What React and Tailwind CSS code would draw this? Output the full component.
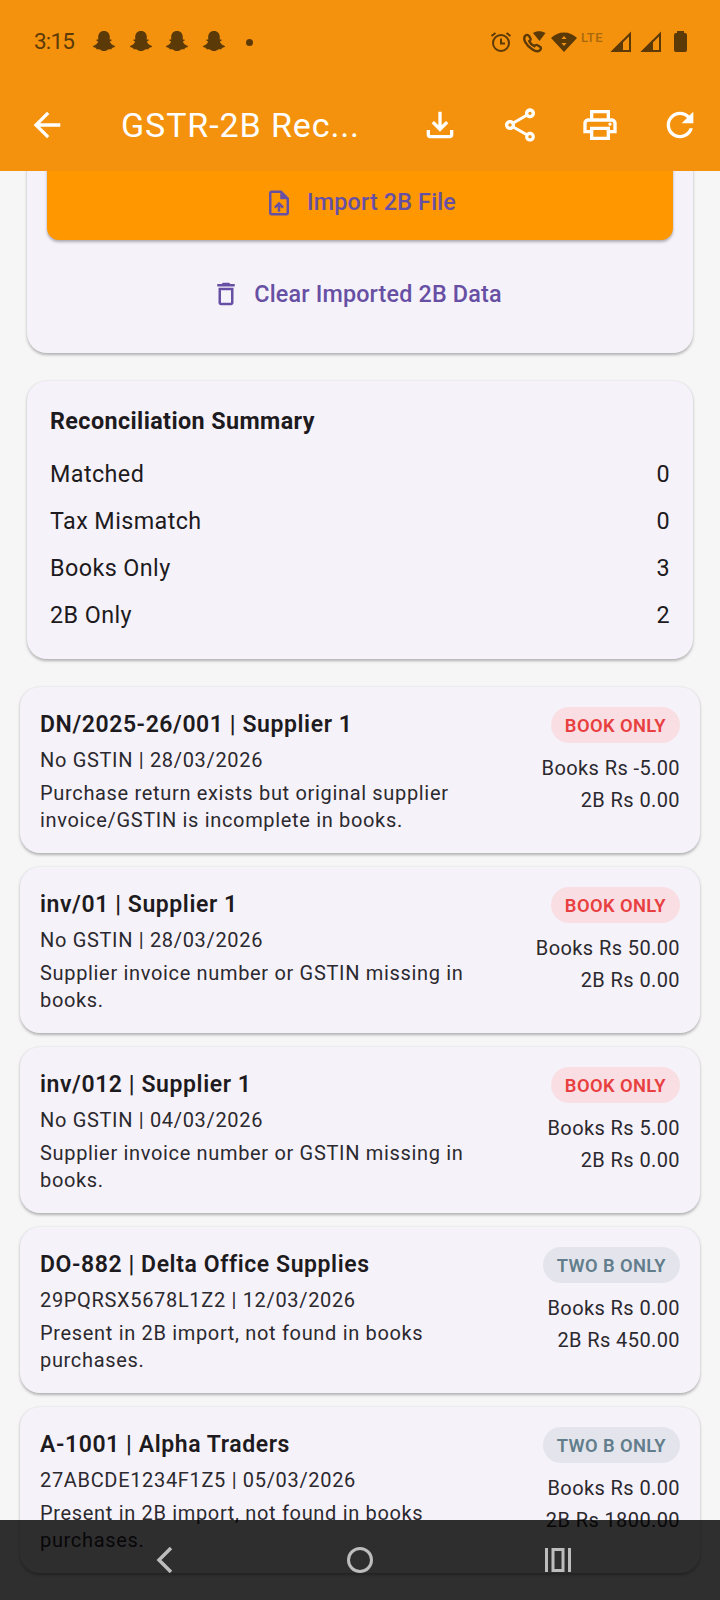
const records = [
  { title: "DN/2025-26/001 | Supplier 1", sub: "No GSTIN | 28/03/2026", note: "Purchase return exists but original supplier invoice/GSTIN is incomplete in books.", books: "Books Rs -5.00", twoB: "2B Rs 0.00", tag: "BOOK ONLY" },
  { title: "inv/01 | Supplier 1", sub: "No GSTIN | 28/03/2026", note: "Supplier invoice number or GSTIN missing in books.", books: "Books Rs 50.00", twoB: "2B Rs 0.00", tag: "BOOK ONLY" },
  { title: "inv/012 | Supplier 1", sub: "No GSTIN | 04/03/2026", note: "Supplier invoice number or GSTIN missing in books.", books: "Books Rs 5.00", twoB: "2B Rs 0.00", tag: "BOOK ONLY" },
  { title: "DO-882 | Delta Office Supplies", sub: "29PQRSX5678L1Z2 | 12/03/2026", note: "Present in 2B import, not found in books purchases.", books: "Books Rs 0.00", twoB: "2B Rs 450.00", tag: "TWO B ONLY" },
  { title: "A-1001 | Alpha Traders", sub: "27ABCDE1234F1Z5 | 05/03/2026", note: "Present in 2B import, not found in books purchases.", books: "Books Rs 0.00", twoB: "2B Rs 1800.00", tag: "TWO B ONLY" },
];

const summary = [
  ["Matched", 0],
  ["Tax Mismatch", 0],
  ["Books Only", 3],
  ["2B Only", 2],
];

// material icon paths, the app bar ones are all drawn at 40px
const paths = {
  back: "M20 11H7.83l5.59-5.59L12 4l-8 8 8 8 1.41-1.41L7.83 13H20v-2z",
  download: "M18 15v3H6v-3H4v3c0 1.1.9 2 2 2h12c1.1 0 2-.9 2-2v-3h-2zm-1-4l-1.41-1.41L13 12.17V4h-2v8.17L8.41 9.59 7 11l5 5 5-5z",
  share: "M18 16.08c-.76 0-1.44.3-1.96.77L8.91 12.7c.05-.23.09-.46.09-.7s-.04-.47-.09-.7l7.05-4.11c.54.5 1.25.81 2.04.81 1.66 0 3-1.34 3-3s-1.34-3-3-3-3 1.34-3 3c0 .24.04.47.09.7L8.04 9.81C7.5 9.31 6.79 9 6 9c-1.66 0-3 1.34-3 3s1.34 3 3 3c.79 0 1.5-.31 2.04-.81l7.12 4.16c-.05.21-.08.43-.08.65 0 1.61 1.31 2.92 2.92 2.92 1.61 0 2.92-1.31 2.92-2.92s-1.31-2.92-2.92-2.92zM18 4c.55 0 1 .45 1 1s-.45 1-1 1-1-.45-1-1 .45-1 1-1zM6 13c-.55 0-1-.45-1-1s.45-1 1-1 1 .45 1 1-.45 1-1 1zm12 7.02c-.55 0-1-.45-1-1s.45-1 1-1 1 .45 1 1-.45 1-1 1z",
  print: "M19 8h-1V3H6v5H5c-1.66 0-3 1.34-3 3v6h4v4h12v-4h4v-6c0-1.66-1.34-3-3-3zM8 5h8v3H8V5zm8 12v2H8v-4h8v2zm2-2v-2H6v2H4v-4c0-.55.45-1 1-1h14c.55 0 1 .45 1 1v4h-2z M18 10.5a1 1 0 1 0 0 2 1 1 0 0 0 0-2z",
  refresh: "M17.65 6.35C16.2 4.9 14.21 4 12 4c-4.42 0-7.99 3.58-7.99 8s3.57 8 7.99 8c3.73 0 6.84-2.55 7.73-6h-2.08c-.82 2.33-3.04 4-5.65 4-3.31 0-6-2.69-6-6s2.69-6 6-6c1.66 0 3.14.69 4.22 1.78L13 11h7V4l-2.35 2.35z",
  upload: "M14 2H6c-1.1 0-2 .9-2 2v16c0 1.1.9 2 2 2h12c1.1 0 2-.9 2-2V8l-6-6zm4 18H6V4h7v5h5v11zM8 15.01l1.41 1.41L11 14.84V19h2v-4.16l1.59 1.59L16 15.01 12.01 11z",
  trash: "M6 19c0 1.1.9 2 2 2h8c1.1 0 2-.9 2-2V7H6v12zM8 9h8v10H8V9zm7.5-5l-1-1h-5l-1 1H5v2h14V4z",
};

function Icon({ name, size = 40 }) {
  return (
    <svg width={size} height={size} viewBox="0 0 24 24" fill="currentColor">
      <path d={paths[name]} />
    </svg>
  );
}

function Ghost() {
  return (
    <svg width="24" height="24" viewBox="0 0 24 24" fill="#5c3a07">
      <path d="M12 1c3.8 0 5.8 2.7 5.8 6 0 1 0 1.8-.1 2.5.7.2 1.4-.2 1.9.3.4.6-.4 1.2-1.7 1.7.5 2 2.5 3.7 5.1 4.5.3 1-1.3 1.6-3 1.9-.4.4-.2 1.2-.7 1.4-1.1 0-2.1-.2-3.1.2-1 .4-2.2 1.6-4.2 1.6s-3.2-1.2-4.2-1.6c-1-.4-2-.2-3.1-.2-.5-.2-.3-1-.7-1.4-1.7-.3-3.3-.9-3-1.9 2.6-.8 4.6-2.5 5.1-4.5-1.3-.5-2.1-1.1-1.7-1.7.5-.5 1.2-.1 1.9-.3-.1-.7-.1-1.5-.1-2.5 0-3.3 2-6 5.8-6z" />
    </svg>
  );
}

function StatusBar() {
  return (
    <div className="flex h-[84px] items-center justify-between pl-[34px] pr-[33px] text-[#5c3a07]">
      <div className="flex items-center">
        <span className="w-[40px] text-[22.5px] tracking-[-0.8px]">3:15</span>
        <div className="ml-[18px] flex gap-[12.7px]">
          <Ghost />
          <Ghost />
          <Ghost />
          <Ghost />
        </div>
        <span className="ml-[20px] h-[7px] w-[7px] rounded-full bg-[#5c3a07]" />
      </div>
      <div className="flex items-center">
        <svg width="22" height="22" viewBox="0 0 22 22" fill="none" stroke="#5c3a07" strokeWidth="2">
          <circle cx="11" cy="12" r="8" />
          <path d="M11 7.5v5h4M1.5 5l4-3M20.5 5l-4-3" />
        </svg>
        <svg className="ml-[10px]" width="24" height="24" viewBox="0 0 24 24" fill="#5c3a07">
          <path d="M3 6c1.5-1.5 3-1.5 4 0l1.5 2.5c.5 1 0 1.7-1.2 2.7.9 2.2 2.8 4.1 5 5 1-1.2 1.7-1.7 2.7-1.2l3 1.7c1.3.8 1.2 2.3-.3 3.6-1.5 1.3-4.2 1-7.2-.8-3-1.8-5.7-4.5-7.3-7.5-1.2-2.3-1.2-4.5-.2-6z" fill="none" stroke="#5c3a07" strokeWidth="2.4" />
          <path d="M11 3c3.500-2.500 8.500-2.500 12.500 0l-6 8z" />
        </svg>
        <svg className="ml-[5px]" width="26" height="20" viewBox="0 0 26 20">
          <path d="M0 6c7-7.500 19-7.500 26 0L13 20z" fill="#5c3a07" />
          <path d="M13 4l2.500 3h-5zM13 14l2.500-3h-5z" fill="#f4920e" />
        </svg>
        <span className="-mt-[10px] ml-[4px] w-[25px] text-[13px] font-medium leading-none tracking-[0.4px] text-[#a8690c]">LTE</span>
        <svg className="ml-[4px]" width="22" height="22" viewBox="0 0 22 22" fill="none" stroke="#5c3a07" strokeWidth="2">
          <path d="M20 3v17H3z" />
          <path d="M3 20l9-9v9z" fill="#5c3a07" />
        </svg>
        <svg className="ml-[8px]" width="22" height="22" viewBox="0 0 22 22" fill="none" stroke="#5c3a07" strokeWidth="2">
          <path d="M20 3v17H3z" />
          <path d="M3 20l9-9v9z" fill="#5c3a07" />
        </svg>
        <span className="relative ml-[12px] h-[19px] w-[13px] rounded-[2px] bg-[#5c3a07]">
          <span className="absolute -top-[2px] left-[3px] h-[2px] w-[7px] bg-[#5c3a07]" />
        </span>
      </div>
    </div>
  );
}

function AppBar() {
  return (
    <div className="flex h-[87px] items-center pb-[5px] pl-[7px] text-white">
      <span className="flex w-[80px] justify-center"><Icon name="back" /></span>
      <span className="ml-[34px] flex-1 text-[34px] leading-none tracking-[0.9px]">GSTR-2B Rec...</span>
      <span className="flex w-[80px] justify-center"><Icon name="download" /></span>
      <span className="flex w-[80px] justify-center"><Icon name="share" /></span>
      <span className="flex w-[80px] justify-center"><Icon name="print" /></span>
      <span className="flex w-[80px] justify-center"><Icon name="refresh" /></span>
    </div>
  );
}

function RecordCard({ item }) {
  const bookOnly = item.tag === "BOOK ONLY";
  return (
    <div className="flex h-[166px] justify-between rounded-[20px] bg-[#f6f2fa] px-[20px] pt-[20px] shadow-[0_1.5px_3px_rgba(0,0,0,0.28)]">
      <div className="mt-[2px] w-[430px]">
        <div className="text-[23px] font-semibold leading-[32px] tracking-[0.58px] text-[#1d1b20]">{item.title}</div>
        <div className="mt-[5px] text-[20px] leading-[28px] tracking-[0.67px] text-[#2b292e]">{item.sub}</div>
        <div className="mt-[6px] text-[20px] leading-[27px] tracking-[0.67px] text-[#2b292e]">{item.note}</div>
      </div>
      <div className="flex flex-col items-end">
        <span className={`rounded-full px-[14px] pt-[1px] text-[18.33px] font-semibold leading-[35px] tracking-[0.4px] ${bookOnly ? "bg-[#f9dfe3] text-[#e84040]" : "bg-[#e4e5ec] text-[#627d8b]"}`}>{item.tag}</span>
        <div className="mt-[9px] text-[20px] leading-[32px] tracking-[0.4px] text-[#2b292e]">{item.books}</div>
        <div className="text-[20px] leading-[32px] tracking-[0.4px] text-[#2b292e]">{item.twoB}</div>
      </div>
    </div>
  );
}

export default function App() {
  return (
    <div className="relative h-[1600px] w-[720px] overflow-hidden bg-[#f6f6f7] font-['Roboto',sans-serif]">
      <header className="relative z-10 bg-[#f4920e]">
        <StatusBar />
        <AppBar />
      </header>

      <main className="px-[20px]">
        <section className="mx-[7px] -mt-[6px] h-[188px] rounded-b-[20px] bg-[#f6f2fa] px-[20px] shadow-[0_1.5px_3px_rgba(0,0,0,0.28)]">
          <button type="button" className="flex h-[75px] w-full items-center justify-center gap-[13px] rounded-b-[12px] bg-[#ff9800] text-[23.33px] font-medium tracking-[0.17px] text-[#6750a4] shadow-[0_1.5px_3px_rgba(0,0,0,0.3)]">
            <Icon name="upload" size={30} />
            Import 2B File
          </button>
          <button type="button" className="mt-[30px] flex h-[48px] w-full items-center justify-center gap-[13px] pr-[7px] text-[23.33px] font-medium tracking-[0.17px] text-[#6750a4]">
            <Icon name="trash" size={30} />
            Clear Imported 2B Data
          </button>
        </section>

        <section className="mx-[7px] mt-[28px] h-[278px] rounded-[20px] bg-[#f6f2fa] px-[23px] pt-[25px] shadow-[0_1.5px_3px_rgba(0,0,0,0.28)]">
          <h2 className="mb-[15px] text-[23.33px] font-bold leading-[30px] tracking-[0.4px] text-[#1d1b20]">Reconciliation Summary</h2>
          {summary.map(([label, count]) => (
            <div key={label} className="flex h-[47px] items-center justify-between text-[23.33px] tracking-[0.42px] text-[#1d1b20]">
              <span>{label}</span>
              <span>{count}</span>
            </div>
          ))}
        </section>

        <div className="mt-[28px] flex flex-col gap-[14px]">
          {records.map((item) => (
            <RecordCard key={item.title} item={item} />
          ))}
        </div>
      </main>

      <nav className="absolute inset-x-0 bottom-0 flex h-[80px] items-start justify-center bg-black/[0.81] pl-[5px] pt-[26px]">
        <div className="flex items-center gap-[171px]">
          <svg width="20" height="28" viewBox="0 0 20 28" fill="none" stroke="#bdbdbd" strokeWidth="3.5">
            <path d="M16 2L4 14l12 12" />
          </svg>
          <svg width="28" height="28" viewBox="0 0 28 28" fill="none" stroke="#bdbdbd" strokeWidth="3">
            <circle cx="14" cy="14" r="11.5" />
          </svg>
          <svg width="26" height="26" viewBox="0 0 26 26" fill="none" stroke="#bdbdbd" strokeWidth="3">
            <path d="M1.5 1v24M24.5 1v24" />
            <rect x="8" y="2.5" width="10" height="21" />
          </svg>
        </div>
      </nav>
    </div>
  );
}
